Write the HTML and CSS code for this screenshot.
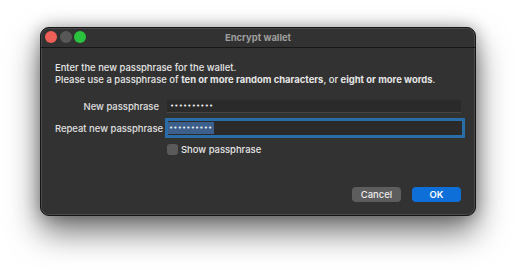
FILE: index.html
```html
<!DOCTYPE html>
<html lang="en">
<head>
  <meta charset="UTF-8" />
  <title>Encrypt wallet</title>
  <link rel="stylesheet" href="styles.css">
</head>
<body>
  <div class="window">
    <div class="titlebar">
      <div class="lights">
        <span class="light red"></span>
        <span class="light grey"></span>
        <span class="light green"></span>
      </div>
      <div class="title">Encrypt wallet</div>
    </div>

    <div class="content">
      <p class="intro">
        Enter the new passphrase for the wallet.<br>
        Please use a passphrase of <b>ten or more random characters</b>, or <b>eight or more words</b>.
      </p>

      <div class="form">
        <label>New passphrase</label>
        <div class="field"><span class="dots">••••••••••</span></div>

        <label>Repeat new passphrase</label>
        <div class="field focused"><span class="dots selected">••••••••••</span></div>

        <span></span>
        <div class="check"><span class="box"></span>Show passphrase</div>
      </div>

      <div class="buttons">
        <button class="btn">Cancel</button>
        <button class="btn primary">OK</button>
      </div>
    </div>
  </div>
</body>
</html>
```

FILE: styles.css
```css
* { box-sizing: border-box; }
body, html {
  margin: 0;
  padding: 0;
  background: #fff;
  font-family: Inter, 'Liberation Sans', sans-serif;
  font-size: 9.45px;
  font-weight: 500;
  color: #e6e6e6;
}

body {
  padding: 27px 0 0 40px;
  height: 270px;
}

.window {
  width: 436px;
  height: 189px;
  background: #323232;
  border-radius: 9px;
  display: flex;
  flex-direction: column;
  border: 1px solid #161616;
  box-shadow:
    inset 0 0 0 1px #4a4a4a,
    0 16px 32px rgba(0, 0, 0, 0.55),
    0 0 16px rgba(0, 0, 0, 0.3);
}

.titlebar {
  height: 20px;
  position: relative;
  border-bottom: 1px solid #161616;
  display: flex;
  align-items: center;
  justify-content: center;
}

.lights {
  position: absolute;
  left: 4px;
  top: 3px;
  display: flex;
  gap: 2.5px;
}

.light {
  width: 12px;
  height: 12px;
  border-radius: 50%;
}
.red { background: #ee5f58; }
.grey { background: #575757; }
.green { background: #2ac13f; }

.title {
  color: #9e9e9e;
  font-weight: 700;
}

.content {
  flex-grow: 1;
  display: flex;
  flex-direction: column;
  padding: 14px 14px 13px 14px;
}

.intro {
  margin: 0;
  line-height: 12px;
}

.intro b { font-weight: 700; }

.form {
  margin-top: 13px;
  display: grid;
  grid-template-columns: 104px 1fr;
  column-gap: 8px;
  row-gap: 8px;
  align-items: center;
}

.form label {
  text-align: right;
  white-space: nowrap;
  color: #e0e0e0;
}

.field {
  height: 14px;
  background: #2a2a2a;
  border-top: 1px solid #303030;
  border-bottom: 1px solid #454545;
  display: flex;
  align-items: center;
  padding-left: 2px;
}

.field.focused {
  margin-left: 1px;
  margin-right: -1px;
  box-shadow: 0 0 0 3px #2a6ca8;
  border: none;
  padding-left: 0;
}

.dots {
  font-family: 'DejaVu Sans', sans-serif;
  font-size: 7px;
  letter-spacing: 0.2px;
  color: #f0f0f0;
  padding: 0 1px;
  line-height: 12px;
}

.dots.selected {
  background: #3c5f8c;
  padding: 0 2px 0 1px;
}

.check {
  display: flex;
  align-items: center;
  gap: 3px;
  margin-top: 1px;
}

.box {
  width: 11px;
  height: 11px;
  border-radius: 3px;
  background: #5a5a5a;
}

.buttons {
  margin-top: auto;
  display: flex;
  justify-content: flex-end;
  gap: 11px;
}

.btn {
  width: 49px;
  height: 15px;
  border: none;
  border-radius: 4px;
  background: #5d5d5d;
  color: #ececec;
  font-family: Inter, 'Liberation Sans', sans-serif;
  font-size: 9.45px;
  font-weight: 500;
  padding: 0;
}

.btn.primary {
  background: #0f6fd9;
  color: #fff;
  font-weight: 600;
}
```
